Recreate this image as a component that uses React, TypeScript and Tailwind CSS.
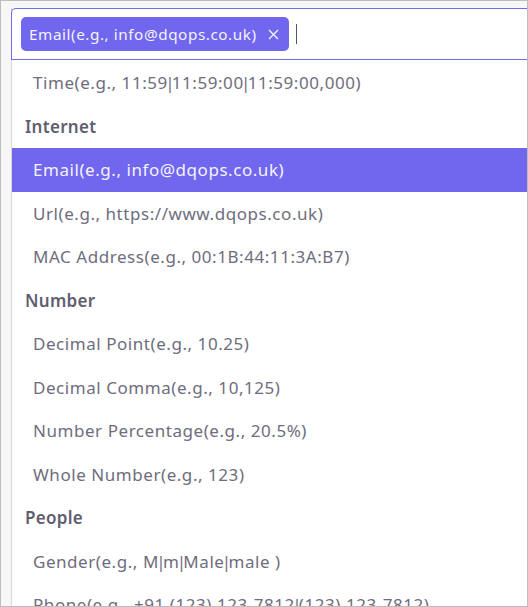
import React from "react";

type Row = { kind: "h" | "i"; text: string; active?: boolean };

const rows: Row[] = [
  { kind: "i", text: "Time(e.g., 11:59|11:59:00|11:59:00,000)" },
  { kind: "h", text: "Internet" },
  { kind: "i", text: "Email(e.g., info@dqops.co.uk)", active: true },
  { kind: "i", text: "Url(e.g., https://www.dqops.co.uk)" },
  { kind: "i", text: "MAC Address(e.g., 00:1B:44:11:3A:B7)" },
  { kind: "h", text: "Number" },
  { kind: "i", text: "Decimal Point(e.g., 10.25)" },
  { kind: "i", text: "Decimal Comma(e.g., 10,125)" },
  { kind: "i", text: "Number Percentage(e.g., 20.5%)" },
  { kind: "i", text: "Whole Number(e.g., 123)" },
  { kind: "h", text: "People" },
  { kind: "i", text: "Gender(e.g., M|m|Male|male )" },
  { kind: "i", text: "Phone(e.g., +91 (123) 123-7812|(123) 123-7812)" },
];

function withPipes(t: string) {
  const parts = t.split("|");
  return parts.map((p, i) => (
    <React.Fragment key={i}>
      {i > 0 && <span className="inline-flex justify-center w-[4px] tracking-normal">|</span>}
      {p}
    </React.Fragment>
  ));
}

export default function App() {
  return (
    <div
      className="w-[528px] h-[607px] overflow-hidden bg-[#f7f7f7] border border-[#bdbdbd] pt-[7px] pl-[10px]"
      style={{ fontFamily: '"Noto Sans", "Open Sans", sans-serif' }}
    >
      <div className="h-full bg-white border-l border-[#d9d9d9]">
        <div className="h-[52px] -ml-px border border-r-0 border-[#736ced] rounded-tl-[5px] flex items-center pl-[9px] bg-white">
          <div className="h-[34px] rounded-[5px] bg-[#7166ee] flex items-center pl-[8px] pr-[10px] text-[15.3px] tracking-[0.55px] text-[#f4f3ff] whitespace-nowrap">
            <span>Email(e.g., info@dqops.co.uk)</span>
            <svg className="ml-[11px]" width="11" height="11" viewBox="0 0 11 11">
              <path d="M1 1L10 10M10 1L1 10" stroke="#f4f3ff" strokeWidth="1.4" />
            </svg>
          </div>
          <div className="ml-[7px] w-px h-[20px] bg-[#555]" />
        </div>
        <div className="pt-[1px]">
          {rows.map((r, i) =>
            r.kind === "h" ? (
              <div
                key={i}
                className="h-[43.5px] flex items-center pl-[13px] text-[17px] tracking-[0.3px] font-semibold text-[#5f5e6f]"
              >
                {r.text}
              </div>
            ) : (
              <div
                key={i}
                className={
                  "h-[43.5px] flex items-center pl-[21px] text-[17px] tracking-[0.55px] whitespace-nowrap " +
                  (r.active ? "bg-[#7166ee] text-[#f4f3ff]" : "text-[#6e6d7d]")
                }
              >
                <span>{withPipes(r.text)}</span>
              </div>
            )
          )}
        </div>
      </div>
    </div>
  );
}
